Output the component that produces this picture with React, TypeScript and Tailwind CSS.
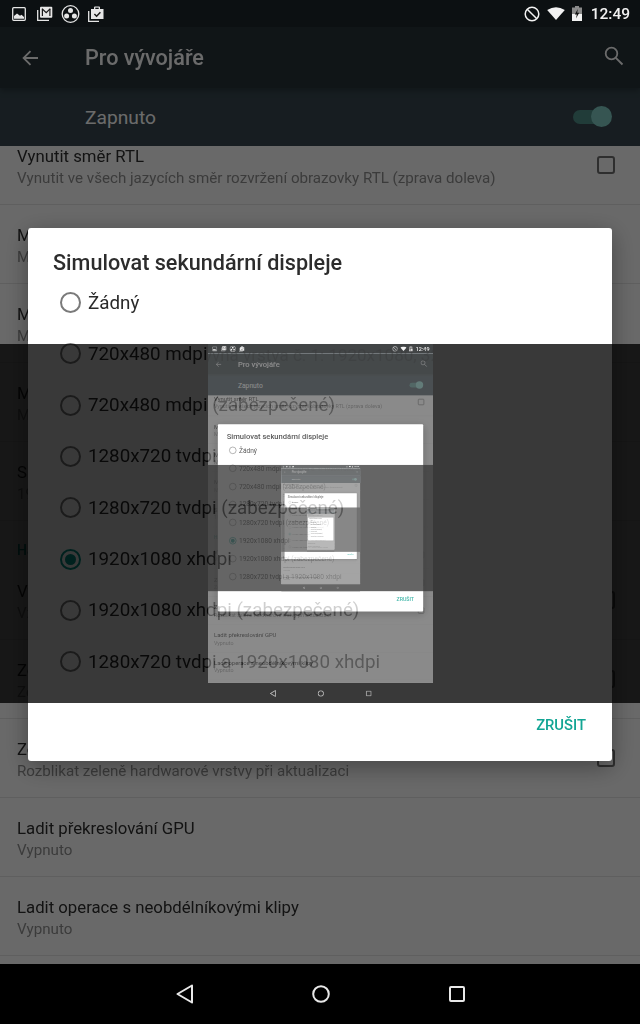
import React from "react";

const font = { fontFamily: "Roboto, sans-serif" };

type RowData = { t: string; s: string; check?: boolean };

const rowsA: RowData[] = [
  { t: "Vynutit směr RTL", s: "Vynutit ve všech jazycích směr rozvržení obrazovky RTL (zprava doleva)", check: true },
  { t: "Měřítko animace okna", s: "Měřítko animace 1x" },
  { t: "Měřítko animace přeměny", s: "Měřítko animace 1x" },
  { t: "Měřítko délky animace", s: "Měřítko animace 1x" },
  { t: "Simulovat sekundární displeje", s: "1920x1080 xhdpi" },
];
const rowsB: RowData[] = [
  { t: "Vykreslování pomocí GPU", s: "Vždy použít GPU pro dvourozměrné vykreslování", check: true },
  { t: "Zobrazit aktualizace GPU", s: "Zobrazit zobrazení v oknech při vykreslování", check: true },
  { t: "Zobrazit aktualizace vrstev", s: "Rozblikat zeleně hardwarové vrstvy při aktualizaci", check: true },
  { t: "Ladit překreslování GPU", s: "Vypnuto" },
  { t: "Ladit operace s neobdélníkovými klipy", s: "Vypnuto" },
];

const options = [
  "Žádný",
  "720x480 mdpi",
  "720x480 mdpi (zabezpečené)",
  "1280x720 tvdpi",
  "1280x720 tvdpi (zabezpečené)",
  "1920x1080 xhdpi",
  "1920x1080 xhdpi (zabezpečené)",
  "1280x720 tvdpi a 1920x1080 xhdpi",
];

function Row({ r }: { r: RowData }) {
  return (
    <div className="h-[79px] shrink-0 border-b border-[#e3e3e3] pl-[17px] pr-[25px] flex items-center justify-between">
      <div className="min-w-0 mt-[3px]">
        <div className="text-[16.76px] leading-[23px] text-[#2e2e2e] whitespace-nowrap">{r.t}</div>
        <div className="text-[15.15px] leading-[21px] text-[#8e8e8e] whitespace-nowrap">{r.s}</div>
      </div>
      {r.check && <div className="w-[18px] h-[18px] border-2 border-[#6e6e6e] rounded-[3px] shrink-0" />}
    </div>
  );
}

function StatusBar() {
  return (
    <div className="h-[27px] shrink-0 bg-[#0c1012] flex items-center justify-between pl-[12px] pr-[10px] text-white">
      <div className="flex items-center">
        <svg width="14" height="14" viewBox="0 0 14 14">
          <rect x="0.7" y="0.7" width="12.6" height="12.6" rx="1" fill="none" stroke="#e6e6e6" strokeWidth="1.3" />
          <path d="M2 11.8 L2 9 L5 6.5 L8 8.8 L9.5 7.8 L12 10 L12 11.8 Z" fill="#e6e6e6" />
        </svg>
        <svg width="16" height="15" viewBox="0 0 16 15" className="ml-[11px]">
          <path d="M0.7 4 V14.3 H12" fill="none" stroke="#e6e6e6" strokeWidth="1.3" />
          <rect x="3" y="0.7" width="12.3" height="11" rx="1" fill="#e6e6e6" />
          <path d="M5 2.6 L9.2 6.6 L13.3 2.6" fill="none" stroke="#1a1a1a" strokeWidth="1.3" />
          <path d="M5.4 3 V10 M12.9 3 V10" stroke="#1a1a1a" strokeWidth="1.2" />
        </svg>
        <svg width="19" height="18" viewBox="0 0 19 18" className="ml-[8px]">
          <circle cx="9.5" cy="9" r="8.3" fill="none" stroke="#e6e6e6" strokeWidth="1.3" />
          <circle cx="9.5" cy="5.4" r="2.5" fill="#e6e6e6" />
          <circle cx="5.6" cy="11" r="2.5" fill="#e6e6e6" />
          <circle cx="13.4" cy="11" r="2.5" fill="#e6e6e6" />
        </svg>
        <svg width="16" height="16" viewBox="0 0 16 16" className="ml-[8px]">
          <path d="M0.7 5 V15.3 H11" fill="none" stroke="#e6e6e6" strokeWidth="1.3" />
          <path d="M3 3 H6 V1.5 Q6 0.5 7 0.5 H11 Q12 0.5 12 1.5 V3 H15.5 V13 H3 Z" fill="#e6e6e6" />
          <rect x="7.3" y="1.6" width="3.4" height="1.4" fill="#0c1012" />
          <path d="M6.4 8 L8.6 10.2 L12.4 6.2" fill="none" stroke="#1a1a1a" strokeWidth="1.5" />
        </svg>
      </div>
      <div className="flex items-center">
        <svg width="16" height="16" viewBox="0 0 16 16">
          <circle cx="8" cy="8" r="6.8" fill="none" stroke="#f2f2f2" strokeWidth="1.5" />
          <path d="M3.2 3.2 L12.8 12.8" stroke="#f2f2f2" strokeWidth="1.5" />
        </svg>
        <svg width="18" height="13" viewBox="0 0 18 13" className="ml-[7px]">
          <path d="M0.2 3 Q9 -2.5 17.8 3 L9 13 Z" fill="#f2f2f2" />
        </svg>
        <svg width="10" height="15" viewBox="0 0 10 15" className="ml-[7px]">
          <rect x="3" y="0" width="4" height="2" fill="#8a8a8a" />
          <rect x="0" y="1.5" width="10" height="13.5" fill="#8a8a8a" />
          <rect x="0" y="8" width="10" height="7" fill="#f2f2f2" />
          <path d="M5.8 3 L2.8 8.6 H4.8 L4 12.5 L7.2 6.8 H5.2 Z" fill="#111" />
        </svg>
        <span className="ml-[9px] text-[15.5px] leading-[20px] font-medium text-[#f2f2f2]">12:49</span>
      </div>
    </div>
  );
}

function NavBar() {
  return (
    <div className="h-[60px] shrink-0 bg-black flex items-center justify-center gap-[119px]">
      <svg width="17" height="20" viewBox="0 0 17 20">
        <path d="M16 1.5 L1.5 10 L16 18.5 Z" fill="none" stroke="#e8e8e8" strokeWidth="2" strokeLinejoin="round" />
      </svg>
      <svg width="18" height="18" viewBox="0 0 18 18">
        <circle cx="9" cy="9" r="7.8" fill="none" stroke="#e8e8e8" strokeWidth="2" />
      </svg>
      <svg width="16" height="16" viewBox="0 0 16 16">
        <rect x="1" y="1" width="14" height="14" rx="1" fill="none" stroke="#e8e8e8" strokeWidth="2" />
      </svg>
    </div>
  );
}

function Dialog() {
  return (
    <div className="absolute left-[28px] top-[228px] w-[584px] h-[533px] z-30 bg-white rounded-[3px] shadow-[0_6px_24px_rgba(0,0,0,0.35)] flex flex-col">
      <div className="pl-[25px] pt-[21px] h-[49px] text-[21.6px] leading-[28px] font-medium text-[#2c2c2c] whitespace-nowrap">
        Simulovat sekundární displeje
      </div>
      <div className="flex flex-col">
        {options.map((o, i) => (
          <div key={o} className="h-[51.3px] flex items-center pl-[32px] text-[18.8px] text-[#2a2a2a] whitespace-nowrap">
            <span
              className={
                i === 5
                  ? "w-[21px] h-[21px] rounded-full border-2 border-[#009688] flex items-center justify-center mr-[7px] shrink-0"
                  : "w-[21px] h-[21px] rounded-full border-2 border-[#7a7a7a] mr-[7px] shrink-0"
              }
            >
              {i === 5 && <span className="w-[11px] h-[11px] rounded-full bg-[#009688]" />}
            </span>
            {o}
          </div>
        ))}
      </div>
      <div className="flex justify-end pr-[26px] pt-[28px]">
        <span className="text-[14.8px] leading-[20px] font-medium text-[#12a594]">ZRUŠIT</span>
      </div>
    </div>
  );
}

function Overlay({ depth }: { depth: number }) {
  return (
    <div className="absolute left-0 top-[344px] z-40 w-[640px] h-[359px] bg-black opacity-[0.78] overflow-hidden flex justify-center">
      <div className="relative w-[225px] h-[359px] shrink-0 overflow-hidden blur-[0.6px]">
        <div className="origin-top-left scale-[0.3516] w-[640px] h-[1024px]">
          <Screen depth={depth - 1} />
        </div>
        <div className="absolute left-[-207px] top-[1px] w-[640px] text-center text-[17px] leading-[20px] text-black/40 whitespace-nowrap">
          Překryvná vrstva č. 1: 1920x1080, 320 dpi
        </div>
      </div>
    </div>
  );
}

function Screen({ depth }: { depth: number }) {
  return (
    <div className="relative isolate w-[640px] h-[1024px] overflow-hidden flex flex-col" style={font}>
      <StatusBar />
      <div className="relative isolate flex-1 min-h-0 overflow-hidden flex flex-col bg-[#fafafa]">
        <div className="h-[61px] shrink-0 bg-[#263238] flex items-center pl-[22px] pr-[16px] shadow-[0_3px_6px_rgba(0,0,0,0.25)] z-10">
          <svg width="16" height="16" viewBox="0 0 16 16">
            <path d="M16 8 H2 M8.5 1.2 L1.6 8 L8.5 14.8" fill="none" stroke="#fff" strokeWidth="1.8" />
          </svg>
          <span className="ml-[47px] text-[21.6px] leading-[26px] font-medium text-white">Pro vývojáře</span>
          <svg width="20" height="20" viewBox="0 0 20 20" className="ml-auto -mt-[4px]">
            <circle cx="7.5" cy="7.5" r="5.8" fill="none" stroke="#fff" strokeWidth="1.8" />
            <path d="M11.8 11.8 L18.5 18.5" stroke="#fff" strokeWidth="1.9" />
          </svg>
        </div>
        <div className="h-[58px] shrink-0 bg-[#37474f] flex items-center pl-[85px] pr-[29px] justify-between">
          <span className="text-[19.2px] leading-[26px] mt-[1px] text-white">Zapnuto</span>
          <div className="relative w-[38px] h-[14px] rounded-full bg-[#4f8f89]">
            <div className="absolute -right-[1px] -top-[4px] w-[21px] h-[21px] rounded-full bg-[#80cbc4]" />
          </div>
        </div>
        <div className="flex-1 min-h-0 overflow-hidden">
          <div className="-mt-[20px] flex flex-col">
            {rowsA.map((r) => (
              <Row key={r.t} r={r} />
            ))}
            <div className="h-[40px] shrink-0 pl-[17px] pt-[19px] text-[14px] leading-[21px] font-medium text-[#009688] whitespace-nowrap">
              Hardwarově urychlené vykreslování
            </div>
            {rowsB.map((r) => (
              <Row key={r.t} r={r} />
            ))}
          </div>
        </div>
        <div className="absolute inset-0 bg-black/[0.58] z-20" />
      </div>
      <NavBar />
      <Dialog />
      {depth > 0 && <Overlay depth={depth} />}
    </div>
  );
}

export default function App() {
  return (
    <div className="w-[640px] h-[1024px] overflow-hidden blur-[0.3px]">
      <Screen depth={3} />
    </div>
  );
}
